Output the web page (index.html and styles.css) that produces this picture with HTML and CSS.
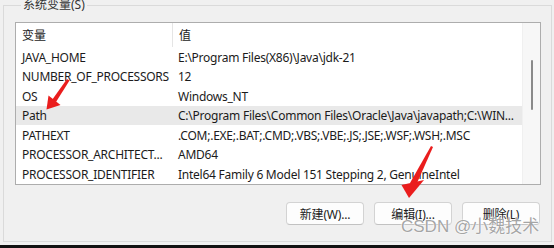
FILE: index.html
```html
<!DOCTYPE html>
<html lang="zh-CN">
<head>
<meta charset="UTF-8">
<meta name="viewport" content="width=device-width, initial-scale=1.0">
<title>系统变量</title>
<link rel="stylesheet" href="styles.css">
</head>
<body>
    <fieldset class="group">
        <legend>系统变量(S)</legend>
        <div class="list">
            <div class="table">
                <div class="row head">
                    <div class="cell name">变量</div>
                    <div class="cell value">值</div>
                </div>
                <div class="row">
                    <div class="cell name">JAVA_HOME</div>
                    <div class="cell value">E:\Program Files(X86)\Java\jdk-21</div>
                </div>
                <div class="row">
                    <div class="cell name">NUMBER_OF_PROCESSORS</div>
                    <div class="cell value">12</div>
                </div>
                <div class="row">
                    <div class="cell name">OS</div>
                    <div class="cell value">Windows_NT</div>
                </div>
                <div class="row selected">
                    <div class="cell name">Path</div>
                    <div class="cell value">C:\Program Files\Common Files\Oracle\Java\javapath;C:\WIN...</div>
                </div>
                <div class="row">
                    <div class="cell name">PATHEXT</div>
                    <div class="cell value">.COM;.EXE;.BAT;.CMD;.VBS;.VBE;.JS;.JSE;.WSF;.WSH;.MSC</div>
                </div>
                <div class="row">
                    <div class="cell name">PROCESSOR_ARCHITECT...</div>
                    <div class="cell value">AMD64</div>
                </div>
                <div class="row">
                    <div class="cell name">PROCESSOR_IDENTIFIER</div>
                    <div class="cell value">Intel64 Family 6 Model 151 Stepping 2, GenuineIntel</div>
                </div>
            </div>
            <div class="scrollbar">
                <div class="thumb"></div>
            </div>
        </div>
        <div class="buttons">
            <button class="btn">新建(W)...</button>
            <button class="btn">编辑(I)...</button>
            <button class="btn">删除(L)</button>
        </div>
    </fieldset>
    <div class="edge"></div>

    <!-- red annotation arrows drawn over the dialog -->
    <svg class="marks" width="554" height="248" viewBox="0 0 554 248">
        <polygon points="67,79 69.5,80.5 56,102 52,100" fill="#ea1d1d"/>
        <polygon points="46.5,109.5 48.5,95.5 60.5,105" fill="#ea1d1d"/>
        <polygon points="431,146 433,147 417,183 410,183" fill="#ea1d1d"/>
        <polygon points="409,198 401.5,185 424,180" fill="#ea1d1d"/>
    </svg>
    <div class="watermark">CSDN @小魏技术</div>
</body>
</html>
```

FILE: styles.css
```css
body {
    margin: 0;
    width: 554px;
    height: 248px;
    overflow: hidden;
    background-color: #f0f0f0;
    font-family: "Noto Sans", "Noto Sans CJK SC", sans-serif;
    font-size: 12px;
    color: #1b1b1b;
    display: flex;
    flex-direction: column;
    position: relative;
}

.group {
    flex: 1;
    margin: -2px 2px 0 3px;
    padding: 10px 10px 0 11px;
    border: 1px solid #dadada;
    min-width: 0;
}

.group legend {
    margin-left: 6px;
    padding: 0 2px;
    line-height: 14px;
    color: #333;
}

.list {
    display: flex;
    height: 161px;
    border: 1px solid #adadad;
    background-color: #fff;
}

.table {
    flex: 1;
    min-width: 0;
}

.row {
    display: flex;
    height: 19.5px;
    align-items: center;
    letter-spacing: -0.25px;
}

.row.head {
    height: 24.25px;
    align-items: stretch;
    letter-spacing: 0;
}

.row.head .cell {
    display: flex;
    align-items: center;
    padding-bottom: 1px;
}

.row.head .name {
    border-right: 1px solid #e5e5e5;
}

.row.selected {
    background-color: #e9e9e9;
}

.cell {
    padding-left: 6px;
    white-space: nowrap;
    overflow: hidden;
}

.cell.name {
    width: 150px;
    flex: none;
}

.cell.value {
    flex: 1;
}

.scrollbar {
    width: 17px;
    background-color: #f7f7f7;
    border-left: 1px solid #f0f0f0;
    display: flex;
    justify-content: center;
}

.thumb {
    width: 2px;
    height: 50px;
    margin-top: 37px;
    border-radius: 1px;
    background-color: #8a8a8a;
}

.buttons {
    display: flex;
    justify-content: flex-end;
    gap: 10px;
    margin-top: 17px;
    padding-right: 1px;
}

.btn {
    width: 78px;
    height: 23px;
    padding: 0;
    font-family: inherit;
    font-size: 12px;
    letter-spacing: -0.2px;
    color: #1b1b1b;
    background-color: #fdfdfd;
    border: 1px solid #d3d3d3;
    border-bottom-color: #c2c2c2;
    border-radius: 4px;
}

.edge {
    height: 3px;
    margin-top: 3px;
    background-color: #111;
}

.marks {
    position: absolute;
    left: 0;
    top: 0;
}

.watermark {
    position: absolute;
    left: 401px;
    top: 216px;
    font-family: "Liberation Sans", "Noto Sans CJK SC", sans-serif;
    font-size: 17px;
    line-height: 22px;
    color: rgba(125, 125, 125, 0.7);
    text-shadow: 0 0 1px #fff, 0 0 2px #fff;
}
```
